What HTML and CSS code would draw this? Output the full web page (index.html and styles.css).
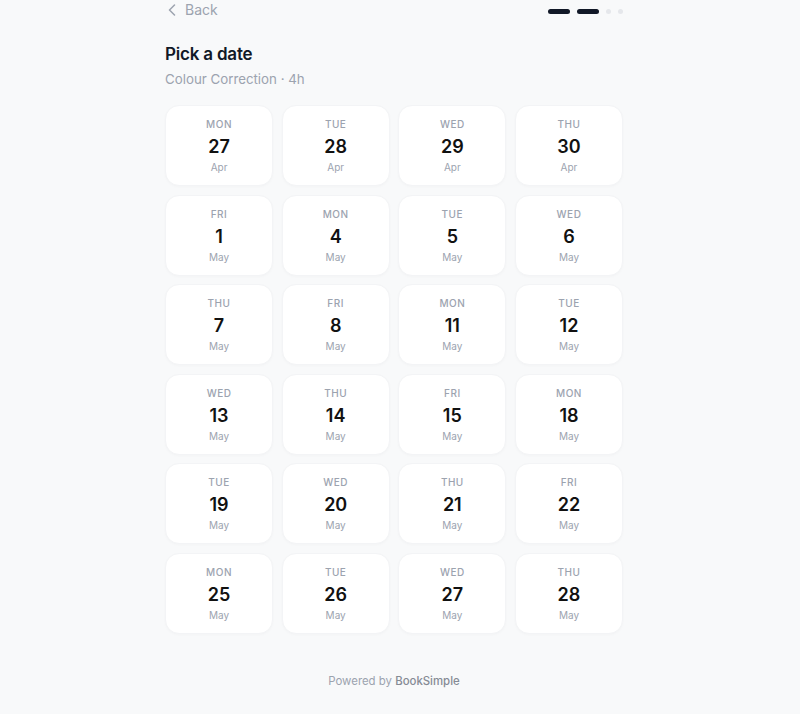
FILE: index.html
```html
<!DOCTYPE html>
<html lang="en">
<head>
<meta charset="utf-8">
<title>Pick a date</title>
<link rel="stylesheet" href="styles.css">
</head>
<body>
<div class="page">
  <div class="topbar">
    <a class="back" href="#">
      <svg class="chev" width="8" height="12" viewBox="0 0 8 12"><path d="M6.5 1 L1.5 6 L6.5 11" fill="none" stroke="#9ca3af" stroke-width="1.5" stroke-linecap="round" stroke-linejoin="round"/></svg>
      <span>Back</span>
    </a>
    <div class="steps">
      <span class="step done"></span>
      <span class="step done"></span>
      <span class="step"></span>
      <span class="step"></span>
    </div>
  </div>
  <h1 class="title">Pick a date</h1>
  <p class="subtitle">Colour Correction · 4h</p>
  <div class="grid">
    <div class="day"><span class="dow">MON</span><span class="num">27</span><span class="mon">Apr</span></div>
    <div class="day"><span class="dow">TUE</span><span class="num">28</span><span class="mon">Apr</span></div>
    <div class="day"><span class="dow">WED</span><span class="num">29</span><span class="mon">Apr</span></div>
    <div class="day"><span class="dow">THU</span><span class="num">30</span><span class="mon">Apr</span></div>
    <div class="day"><span class="dow">FRI</span><span class="num">1</span><span class="mon">May</span></div>
    <div class="day"><span class="dow">MON</span><span class="num">4</span><span class="mon">May</span></div>
    <div class="day"><span class="dow">TUE</span><span class="num">5</span><span class="mon">May</span></div>
    <div class="day"><span class="dow">WED</span><span class="num">6</span><span class="mon">May</span></div>
    <div class="day"><span class="dow">THU</span><span class="num">7</span><span class="mon">May</span></div>
    <div class="day"><span class="dow">FRI</span><span class="num">8</span><span class="mon">May</span></div>
    <div class="day"><span class="dow">MON</span><span class="num">11</span><span class="mon">May</span></div>
    <div class="day"><span class="dow">TUE</span><span class="num">12</span><span class="mon">May</span></div>
    <div class="day"><span class="dow">WED</span><span class="num">13</span><span class="mon">May</span></div>
    <div class="day"><span class="dow">THU</span><span class="num">14</span><span class="mon">May</span></div>
    <div class="day"><span class="dow">FRI</span><span class="num">15</span><span class="mon">May</span></div>
    <div class="day"><span class="dow">MON</span><span class="num">18</span><span class="mon">May</span></div>
    <div class="day"><span class="dow">TUE</span><span class="num">19</span><span class="mon">May</span></div>
    <div class="day"><span class="dow">WED</span><span class="num">20</span><span class="mon">May</span></div>
    <div class="day"><span class="dow">THU</span><span class="num">21</span><span class="mon">May</span></div>
    <div class="day"><span class="dow">FRI</span><span class="num">22</span><span class="mon">May</span></div>
    <div class="day"><span class="dow">MON</span><span class="num">25</span><span class="mon">May</span></div>
    <div class="day"><span class="dow">TUE</span><span class="num">26</span><span class="mon">May</span></div>
    <div class="day"><span class="dow">WED</span><span class="num">27</span><span class="mon">May</span></div>
    <div class="day"><span class="dow">THU</span><span class="num">28</span><span class="mon">May</span></div>
  </div>
  <footer class="footer">Powered by <strong>BookSimple</strong></footer>
</div>
</body>
</html>
```

FILE: styles.css
```css
html, body {
  margin: 0;
  padding: 0;
  background: #f8f9fa;
}
body {
  font-family: Inter, "Noto Sans", "Liberation Sans", sans-serif;
  color: #111827;
  padding-right: 12px;
}
.page {
  width: 458px;
  margin: 0 auto;
}
.topbar {
  display: flex;
  align-items: center;
  justify-content: space-between;
  height: 20px;
}
.back {
  display: flex;
  align-items: center;
  gap: 9px;
  color: #9ca3af;
  text-decoration: none;
  font-size: 14px;
  line-height: 20px;
  padding-left: 3px;
}
.chev {
  display: block;
}
.steps {
  display: flex;
  align-items: center;
  gap: 7px;
  padding-top: 2px;
}
.step {
  width: 5px;
  height: 5px;
  border-radius: 3px;
  background: #e5e7eb;
}
.step.done {
  width: 22px;
  height: 5px;
  background: #111827;
}
.title {
  margin: 22px 0 0;
  font-size: 17px;
  line-height: 24px;
  font-weight: 600;
  letter-spacing: -0.2px;
  color: #111827;
}
.subtitle {
  margin: 3px 0 0;
  font-size: 13.3px;
  line-height: 20px;
  color: #9ca3af;
}
.grid {
  margin-top: 16px;
  display: grid;
  grid-template-columns: repeat(4, 1fr);
  column-gap: 8.6px;
  row-gap: 8.6px;
}
.day {
  height: 81px;
  box-sizing: border-box;
  background: #ffffff;
  border: 1px solid #f3f4f6;
  border-radius: 14px;
  display: flex;
  flex-direction: column;
  align-items: center;
  padding-top: 11px;
  box-shadow: 0 1px 3px rgba(17, 24, 39, 0.025);
}
.dow {
  font-size: 10px;
  line-height: 14px;
  font-weight: 500;
  letter-spacing: 0.5px;
  color: #9ca3af;
}
.num {
  margin-top: 4px;
  font-size: 18px;
  line-height: 24px;
  font-weight: 600;
  color: #111111;
}
.mon {
  margin-top: 1px;
  font-size: 10px;
  line-height: 14px;
  color: #9ca3af;
}
.footer {
  margin-top: 39px;
  text-align: center;
  font-size: 11.4px;
  line-height: 16px;
  color: #9ca3af;
}
.footer strong {
  font-weight: 500;
  color: #868b95;
}
```
